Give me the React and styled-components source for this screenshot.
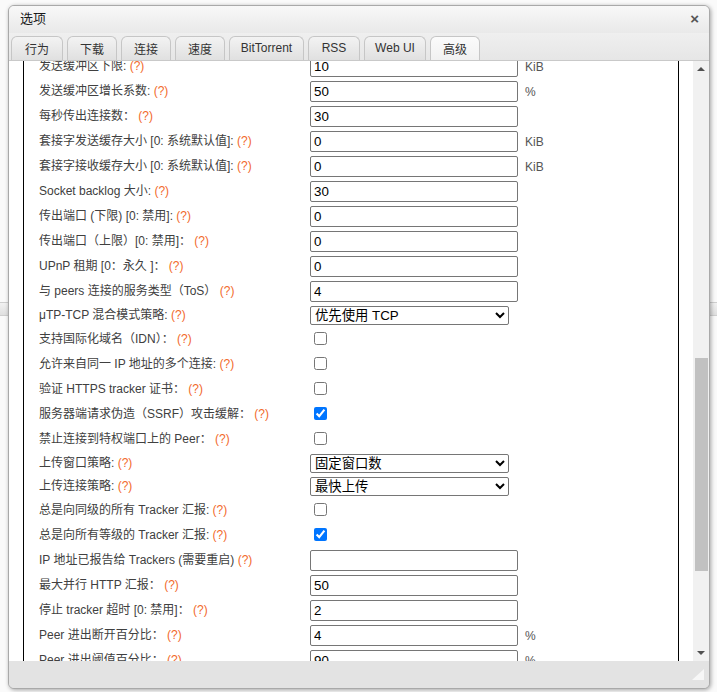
import React from 'react';
import styled, { createGlobalStyle } from 'styled-components';

const GlobalStyle = createGlobalStyle`
  html, body {
    margin: 0;
    padding: 0;
  }
  body {
    width: 717px;
    height: 692px;
    overflow: hidden;
    background: #fafafa;
    font-family: "Liberation Sans", "Noto Sans CJK SC", sans-serif;
  }
`;

const Page = styled.div`
  position: relative;
  width: 717px;
  height: 692px;
  padding-top: 302px;
  box-sizing: border-box;
`;

const BackStrip = styled.div`
  height: 12px;
  border-top: 1px solid #cfcfcf;
  border-bottom: 1px solid #cfcfcf;
  background: linear-gradient(#f2f2f2, #e0e0e0);
`;

const Window = styled.div`
  position: absolute;
  left: 8px;
  top: 5px;
  width: 702px;
  height: 684px;
  box-sizing: border-box;
  border: 1px solid #a9a9a9;
  border-radius: 6px;
  background: #e4e4e4;
  box-shadow: 1px 1px 4px rgba(0, 0, 0, 0.35);
  display: flex;
  flex-direction: column;
  overflow: hidden;
`;

const TitleBar = styled.div`
  height: 27px;
  flex: none;
  display: flex;
  align-items: center;
  padding: 0 10px 5px 11px;
  box-sizing: border-box;
  background: linear-gradient(#f8f8f8, #e9e9e9);
`;

const Title = styled.span`
  font-size: 13px;
  color: #1a1a1a;
`;

const Close = styled.span`
  margin-left: auto;
  margin-top: 3px;
  font-size: 15px;
  font-weight: bold;
  color: #555;
  line-height: 1;
`;

const TabStrip = styled.div`
  flex: none;
  display: flex;
  gap: 4px;
  padding: 3px 0 0 2px;
  background: linear-gradient(#efefef, #e6e6e6);
  border-bottom: 1px solid #c9c9c9;
`;

const Tab = styled.div`
  width: ${p => p.w}px;
  height: 24px;
  box-sizing: border-box;
  display: flex;
  align-items: center;
  justify-content: center;
  padding-bottom: 1px;
  border: 1px solid #c6c6c6;
  border-bottom: 0;
  border-radius: 6px 6px 0 0;
  font-size: 12px;
  color: #333;
  background: ${p => (p.active ? 'linear-gradient(#fbfbfb, #f1f1f1)' : 'linear-gradient(#f3f3f3, #e0e0e0)')};
`;

const Body = styled.div`
  flex: 1;
  display: flex;
  min-height: 0;
  background: #fff;
`;

const Viewport = styled.div`
  flex: 1;
  overflow: hidden;
`;

const Panel = styled.div`
  margin: -7px 14px 0 14px;
  padding-left: 15px;
  border-left: 1px solid #000;
  border-right: 1px solid #000;
  min-height: 640px;
`;

const Row = styled.div`
  display: grid;
  grid-template-columns: 271px 215px auto;
  align-items: center;
  height: ${p => p.h}px;
`;

const Label = styled.div`
  font-size: 12px;
  color: #404040;
  white-space: nowrap;
  line-height: 1.2;
`;

const Help = styled.span`
  color: #f26a2c;
`;

const TextInput = styled.input`
  width: 208px;
  height: 21px;
  box-sizing: border-box;
  border: 1px solid #767676;
  border-radius: 2px;
  padding: 1px 3px;
  margin: 0;
  font-family: "Liberation Sans", "Noto Sans CJK SC", sans-serif;
  font-size: 13.33px;
  color: #000;
  background: #fff;
`;

const Select = styled.select`
  width: 199px;
  height: 19px;
  box-sizing: border-box;
  margin: 0;
  font-family: "Liberation Sans", "Noto Sans CJK SC", sans-serif;
  font-size: 13.33px;
  color: #000;
  border: 1px solid #767676;
  border-radius: 2px;
  background: #fff;
`;

const Check = styled.input`
  width: 13px;
  height: 13px;
  margin: 0 0 0 4px;
`;

const Unit = styled.span`
  font-size: 12px;
  color: #555;
`;

const Scrollbar = styled.div`
  width: 16px;
  flex: none;
  display: flex;
  flex-direction: column;
  background: #f1f1f1;
`;

const ArrowButton = styled.div`
  height: 16px;
  flex: none;
  display: flex;
  align-items: center;
  justify-content: center;
  &::before {
    content: '';
    border-left: 4px solid transparent;
    border-right: 4px solid transparent;
    ${p => (p.down ? 'border-top: 4px solid #505050;' : 'border-bottom: 4px solid #505050;')}
  }
`;

const Track = styled.div`
  flex: 1;
`;

const Thumb = styled.div`
  margin: 281px 1px 0 2px;
  height: 213px;
  background: #c1c1c1;
`;

const Footer = styled.div`
  height: 27px;
  flex: none;
  display: flex;
  justify-content: flex-end;
  align-items: flex-end;
  padding: 0 5px 8px 0;
  box-sizing: border-box;
  background: #e3e3e3;
`;

const Grip = styled.div`
  width: 0;
  height: 0;
  border-left: 12px solid transparent;
  border-bottom: 11px solid #f7f7f7;
`;

const tabs = [
  ['行为', 52],
  ['下载', 50],
  ['连接', 50],
  ['速度', 50],
  ['BitTorrent', 75],
  ['RSS', 52],
  ['Web UI', 62],
  ['高级', 50, true],
];

const rows = [
  { label: '发送缓冲区下限:', type: 'text', value: '10', unit: 'KiB' },
  { label: '发送缓冲区增长系数:', type: 'text', value: '50', unit: '%' },
  { label: '每秒传出连接数：', type: 'text', value: '30' },
  { label: '套接字发送缓存大小 [0: 系统默认值]:', type: 'text', value: '0', unit: 'KiB' },
  { label: '套接字接收缓存大小 [0: 系统默认值]:', type: 'text', value: '0', unit: 'KiB' },
  { label: 'Socket backlog 大小:', type: 'text', value: '30' },
  { label: '传出端口 (下限) [0: 禁用]:', type: 'text', value: '0' },
  { label: '传出端口（上限）[0: 禁用]：', type: 'text', value: '0' },
  { label: 'UPnP 租期 [0：永久 ]：', type: 'text', value: '0' },
  { label: '与 peers 连接的服务类型（ToS）', type: 'text', value: '4' },
  { label: 'μTP-TCP 混合模式策略:', type: 'select', value: '优先使用 TCP' },
  { label: '支持国际化域名（IDN）：', type: 'check' },
  { label: '允许来自同一 IP 地址的多个连接:', type: 'check' },
  { label: '验证 HTTPS tracker 证书：', type: 'check' },
  { label: '服务器端请求伪造（SSRF）攻击缓解：', type: 'check', checked: true },
  { label: '禁止连接到特权端口上的 Peer：', type: 'check' },
  { label: '上传窗口策略:', type: 'select', value: '固定窗口数' },
  { label: '上传连接策略:', type: 'select', value: '最快上传' },
  { label: '总是向同级的所有 Tracker 汇报:', type: 'check' },
  { label: '总是向所有等级的 Tracker 汇报:', type: 'check', checked: true },
  { label: 'IP 地址已报告给 Trackers (需要重启)', type: 'text', value: '' },
  { label: '最大并行 HTTP 汇报：', type: 'text', value: '50' },
  { label: '停止 tracker 超时 [0: 禁用]：', type: 'text', value: '2' },
  { label: 'Peer 进出断开百分比：', type: 'text', value: '4', unit: '%' },
  { label: 'Peer 进出阈值百分比：', type: 'text', value: '90', unit: '%' },
];

const heights = { text: 25, select: 23, check: 25 };

const Control = ({ row }) => {
  if (row.type === 'select') {
    return (
      <Select defaultValue={row.value}>
        <option>{row.value}</option>
      </Select>
    );
  }
  if (row.type === 'check') {
    return <Check type="checkbox" defaultChecked={!!row.checked} />;
  }
  return <TextInput type="text" defaultValue={row.value} />;
};

export default function App() {
  return (
    <>
      <GlobalStyle />
      <Page>
        <BackStrip />
        <Window>
          <TitleBar>
            <Title>选项</Title>
            <Close>×</Close>
          </TitleBar>
          <TabStrip>
            {tabs.map(([name, w, active]) => (
              <Tab key={name} w={w} active={active}>{name}</Tab>
            ))}
          </TabStrip>
          <Body>
            <Viewport>
              <Panel>
                {rows.map((row, i) => (
                  <Row key={i} h={heights[row.type]}>
                    <Label>
                      {row.label} <Help>(?)</Help>
                    </Label>
                    <div>
                      <Control row={row} />
                    </div>
                    <Unit>{row.unit || ''}</Unit>
                  </Row>
                ))}
              </Panel>
            </Viewport>
            <Scrollbar>
              <ArrowButton />
              <Track>
                <Thumb />
              </Track>
              <ArrowButton down />
            </Scrollbar>
          </Body>
          <Footer>
            <Grip />
          </Footer>
        </Window>
      </Page>
    </>
  );
}
